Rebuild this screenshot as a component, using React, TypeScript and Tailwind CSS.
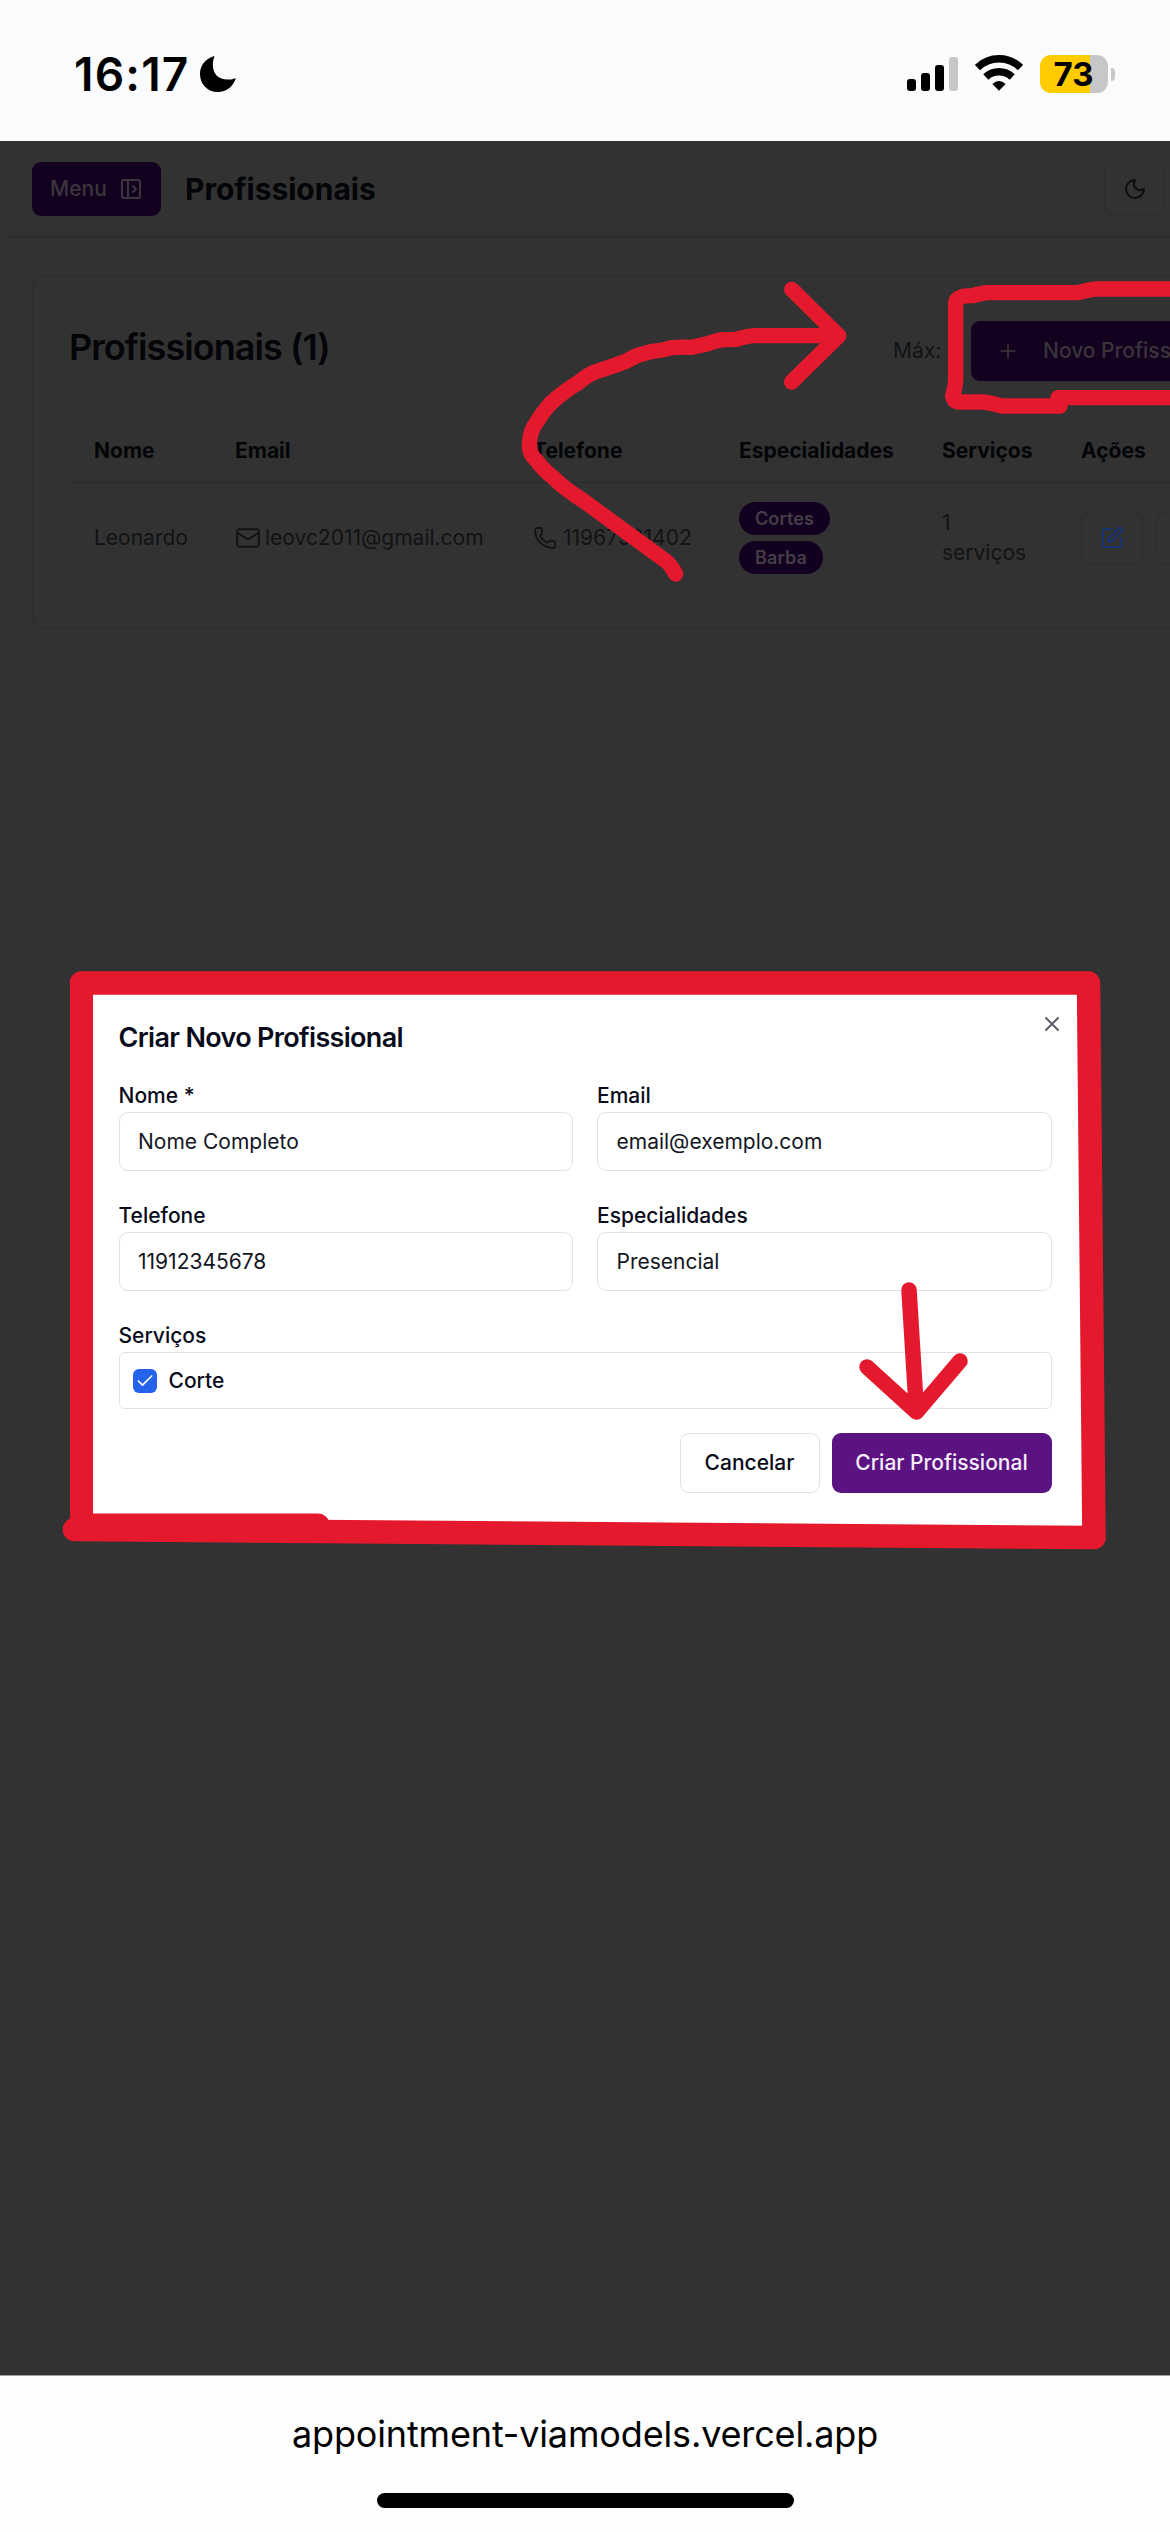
import React from "react";
import { Moon, Mail, Phone, Plus, X, Check, SquarePen, PanelLeftOpen } from "lucide-react";

const tableText = "text-[21px] leading-[30px]";

function StatusBar() {
  return (
    <div className="flex h-[141px] shrink-0 items-start justify-between bg-[#fafbfc] pr-[55px] pl-[74px] text-black">
      <div className="flex items-center pt-[47px]">
        <span className="w-[126px] text-[46px] leading-[54px] font-semibold tracking-[1.2px] whitespace-nowrap">16:17</span>
        <svg className="h-9 w-9" viewBox="0 0 36 36">
          <path d="M13.5 0.3C14 0 14.6 0.4 14.3 1.1C13.2 4 12.9 6.3 12.9 9C12.9 18 18.5 23.6 27.6 23.6C30 23.6 32.3 23.2 34.7 22.4C35.3 22.2 35.8 22.7 35.5 23.3C32.5 31 26.300 36 18 36C7.500 36 0 28.300 0 18C0 9.500 5.400 3 13.500 0.300Z" />
        </svg>
      </div>
      <div className="flex items-start pt-[55px]">
        <div className="mt-[2px] flex h-[34px] items-end gap-[5px]">
          <div className="h-[12px] w-[9px] rounded-[3px] bg-black" />
          <div className="h-[18px] w-[9px] rounded-[3px] bg-black" />
          <div className="h-[26px] w-[9px] rounded-[3px] bg-black" />
          <div className="h-[34px] w-[9px] rounded-[3px] bg-[#c6c7c8]" />
        </div>
        <svg className="ml-[17px] h-[36px] w-[48px]" viewBox="0 0 48 36">
          <path d="M2.500 13.200A31 31 0 0 1 45.500 13.200" fill="none" stroke="black" strokeWidth="7.500" transform="translate(0 -.7)" />
          <path d="M10.800 21.700A19.500 19.500 0 0 1 37.200 21.700" fill="none" stroke="black" strokeWidth="7.500" transform="translate(0 .3)" />
          <path d="M24 35.800L17.400 29Q24 23 30.600 29Z" />
        </svg>
        <div className="ml-[17px] flex items-center">
          <div className="flex h-[38px] w-[68px] items-center justify-center rounded-[11px] bg-[linear-gradient(to_right,#ffcc00_50px,#c6c7c8_50px)]">
            <span className="pr-[1px] text-[33px] leading-[38px] font-bold">73</span>
          </div>
          <div className="ml-[3px] h-[13px] w-[4px] rounded-r-full bg-[#c6c7c8]" />
        </div>
      </div>
    </div>
  );
}

function TopBar() {
  return (
    <header className="ml-1 flex h-[97px] shrink-0 items-start border-b-2 border-[#2c2d2e] pt-[21px] pl-7">
      <button className="flex h-[54px] w-[129px] items-center rounded-[9px] bg-[#14001f] pl-[18px] text-[21px] font-medium text-[#3b363d]">
        <span className="w-[69px] text-left">Menu</span>
        <PanelLeftOpen size={24} strokeWidth={2} />
      </button>
      <h1 className="ml-[24px] text-[30px] leading-[54px] font-bold text-[#030508]">Profissionais</h1>
      <button className="mr-[4px] ml-auto flex h-[54px] w-[62px] items-center justify-center rounded-[9px] border-2 border-[#2e2f30] text-[#0b0d10]">
        <Moon size={24} />
      </button>
    </header>
  );
}

function Badge({ children }: { children: React.ReactNode }) {
  return (
    <span className="flex h-[33px] items-center rounded-full bg-[#130020] px-4 text-[18px] font-semibold tracking-[0.1px] text-[#443e46]">
      {children}
    </span>
  );
}

function ProfessionalsCard() {
  return (
    <section className="mt-[37px] ml-8 h-[354px] w-[1300px] shrink-0 rounded-[12px] border-2 border-[#2e2f30] pl-[37px]">
      <div className="flex h-[132px] items-start pt-[44px]">
        <h2 className="mt-[8px] w-[822px] text-[36px] leading-[36px] font-semibold tracking-[-0.026em] text-[#030508]">
          <span className="-ml-[2px]">Profissionais (1)</span>
        </h2>
        <div className="flex h-[60px] items-center">
          <span className="w-[78px] text-[21px] whitespace-nowrap text-[#111315]">Máx: 5</span>
          <button className="flex h-[60px] w-[290px] items-center rounded-[9px] bg-[#14001f] pl-[25px] text-[21px] font-medium text-[#39353b]">
            <Plus size={24} strokeWidth={1.600} />
            <span className="ml-[23px] whitespace-nowrap">Novo Profissional</span>
          </button>
        </div>
      </div>
      <div className="grid w-[1230px] grid-cols-[141px_298px_206px_203px_139px_1fr] border-b border-[#292a2b] pb-[16px] pl-[23px] text-[21px] leading-[30px] font-bold text-[#030508]">
        <span className="mt-[27px]">Nome</span>
        <span className="mt-[27px]">Email</span>
        <span className="mt-[27px]">Telefone</span>
        <span className="mt-[27px]">Especialidades</span>
        <span className="mt-[27px]">Serviços</span>
        <span className="mt-[27px]">Ações</span>
      </div>
      <div className={`grid h-[110px] w-[1230px] grid-cols-[141px_298px_206px_203px_139px_1fr] items-center pl-[23px] text-[#111315] ${tableText}`}>
        <span>Leonardo</span>
        <span className="flex items-center">
          <Mail size={26} strokeWidth={1.800} />
          <span className="ml-[4px]">leovc2011@gmail.com</span>
        </span>
        <span className="flex items-center">
          <Phone size={24} strokeWidth={1.800} />
          <span className="ml-[6px]">11967531402</span>
        </span>
        <span className="flex flex-col items-start gap-[6px]">
          <Badge>Cortes</Badge>
          <Badge>Barba</Badge>
        </span>
        <span className="w-[90px]">1 serviços</span>
        <span className="flex gap-[13px]">
          <button className="flex h-[54px] w-[62px] items-center justify-center rounded-[9px] border-2 border-[#2e2f30] text-[#143272]">
            <SquarePen size={24} />
          </button>
          <button className="h-[54px] w-[62px] rounded-[9px] border-2 border-[#2e2f30]" />
        </span>
      </div>
    </section>
  );
}

function Field({ label, value }: { label: string; value: string }) {
  return (
    <label className="flex flex-col">
      <span className="text-[21px] leading-[30px] font-medium">{label}</span>
      <span className="mt-px flex h-[59px] items-center rounded-[9px] border-[1.500px] border-[#dfe1e8] pl-[18.500px] text-[21px] text-[#14161f]">
        {value}
      </span>
    </label>
  );
}

function CreateDialog() {
  return (
    <div className="absolute top-[853px] left-[93px] h-[533px] w-[991px] bg-white pt-[24px] pl-[25.500px] text-[#090b1a]">
      <div className="flex h-[60px] w-[933px] items-start justify-between">
        <h3 className="pt-[6px] text-[27px] leading-[27px] font-semibold tracking-[-0.025em]">Criar Novo Profissional</h3>
        <X size={24} className="mt-[-6px] mr-[-12px] text-[#5d5f69]" />
      </div>
      <div className="mt-[3px] grid w-[933px] grid-cols-2 gap-x-[24px] gap-y-[30px]">
        <Field label="Nome *" value="Nome Completo" />
        <Field label="Email" value="email@exemplo.com" />
        <Field label="Telefone" value="11912345678" />
        <Field label="Especialidades" value="Presencial" />
      </div>
      <div className="mt-[30px] text-[21px] leading-[30px] font-medium">Serviços</div>
      <div className="mt-px flex h-[57px] w-[933px] items-center rounded-[6px] border-[1.500px] border-[#dfe1e8] pl-[13px]">
        <span className="flex h-6 w-6 items-center justify-center rounded-[6px] bg-[#2563eb] text-white">
          <Check size={20} strokeWidth={2} />
        </span>
        <span className="ml-3 text-[21px] font-medium">Corte</span>
      </div>
      <div className="mt-[24px] flex w-[933px] justify-end gap-[12px] text-[21px] font-medium">
        <button className="h-[60px] w-[140px] rounded-[9px] border-[1.500px] border-[#dfe1e8]">Cancelar</button>
        <button className="h-[60px] w-[220px] rounded-[9px] bg-[#5b1382] text-[#f5edfa]">Criar Profissional</button>
      </div>
    </div>
  );
}

function Annotations() {
  return (
    <svg
      className="pointer-events-none absolute top-0 left-0 h-[2532px] w-[1170px]"
      viewBox="0 0 1170 2532"
      fill="none"
      stroke="#e5192d"
      strokeLinecap="round"
      strokeLinejoin="round"
    >
      <g transform="translate(500 260) scale(.33333)" strokeWidth="46">
        <path d="M1016 227H765Q740 228 708 238Q680 238 660 240Q640 245 620 252L575 262Q540 260 515 263Q490 270 480 271Q450 274 430 281Q405 286 380 303Q330 322 290 334Q265 342 235 368Q190 395 150 432Q125 460 108 490Q88 515 88 560Q88 580 110 602Q130 630 160 653Q190 684 250 722L500 905Q512 915 527 942" />
        <path d="M875 88L1016 227L875 366" />
      </g>
      <path
        transform="translate(820 260) scale(.33333)"
        strokeWidth="46"
        d="M1090 87H830Q808 88 775 98H500Q470 103 460 107Q407 106 407 130V360Q406 380 398 408Q402 426 420 426H490Q515 428 545 438H720L714 413H1090"
      />
      <path d="M81.500 983H1088.500L1094 1537.500L74.500 1529.500" strokeWidth="23.500" />
      <path d="M81.500 983V1525H318" strokeWidth="23" />
      <path d="M909 1290L916.500 1412M867 1367L916.500 1412L960 1361" strokeWidth="15.500" />
    </svg>
  );
}

function AddressBar() {
  return (
    <footer className="flex h-[157px] shrink-0 flex-col items-center border-t border-[#a0a0a0] bg-[#fdfdfd] text-black">
      <div className="pt-[34px] text-[36px] leading-[48px] tracking-[-0.15px] whitespace-nowrap">appointment-viamodels.vercel.app</div>
      <div className="mt-[35px] h-[15px] w-[417px] rounded-full bg-black" />
    </footer>
  );
}

export default function App() {
  return (
    <div className="relative flex h-[2532px] w-[1170px] flex-col overflow-hidden font-['Inter',sans-serif]">
      <StatusBar />
      <main className="relative flex flex-1 flex-col overflow-hidden bg-[#323232]">
        <TopBar />
        <ProfessionalsCard />
        <CreateDialog />
      </main>
      <AddressBar />
      <Annotations />
    </div>
  );
}
